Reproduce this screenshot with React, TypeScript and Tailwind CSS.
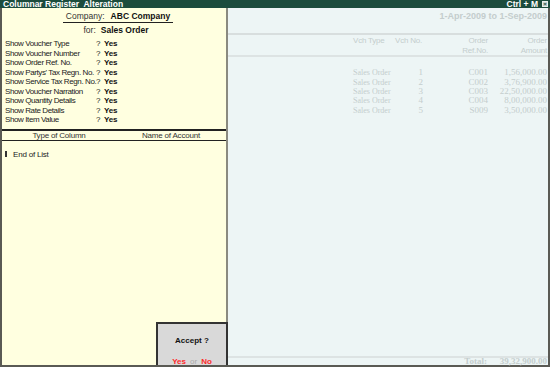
import React from 'react'

const options = [
  'Show Voucher Type',
  'Show Voucher Number',
  'Show Order Ref. No.',
  "Show Partys' Tax Regn. No.",
  'Show Service Tax Regn. No.',
  'Show Voucher Narration',
  'Show Quantity Details',
  'Show Rate Details',
  'Show Item Value',
]

const rows = [
  { no: '1', ref: 'C001', amt: '1,56,000.00' },
  { no: '2', ref: 'C002', amt: '3,76,900.00' },
  { no: '3', ref: 'C003', amt: '22,50,000.00' },
  { no: '4', ref: 'C004', amt: '8,00,000.00' },
  { no: '5', ref: 'S009', amt: '3,50,000.00' },
]

const serif = { fontFamily: '"Liberation Serif", "Times New Roman", serif' }

export default function App() {
  return (
    <div className="w-[550px] h-[367px] flex flex-col bg-white text-[8px] leading-[9px] tracking-[-0.2px]" style={{ fontFamily: '"Liberation Sans", Arial, sans-serif' }}>
      {/* Title bar */}
      <div className="h-[8px] bg-[#1c4c3d] flex items-center justify-between text-white font-bold text-[8.5px] tracking-normal pl-[3px] pr-[2px] overflow-hidden">
        <span>Columnar Register&nbsp; Alteration</span>
        <div className="flex items-center gap-[4px]">
          <span>Ctrl + M</span>
          <span className="w-[6px] h-[6px] bg-[#c8d4d0] border border-[#e8eeec] flex items-center justify-center text-[#1c4c3d] text-[6px]">×</span>
        </div>
      </div>

      <div className="flex-1 flex border-l-2 border-r-2 border-b-2 border-[#5a5a54] min-h-0">
        {/* Left panel */}
        <div className="relative w-[226px] bg-[#ffffe0] border-r-2 border-[#8a8a80] flex flex-col text-[#111]">
          <div className="flex flex-col items-center pt-[4px] pl-[4px] text-[8.5px] tracking-normal">
            <div className="flex items-baseline gap-[6px] border-b border-[#222] px-[3px] pb-[1px] ml-[4px]">
              <span className="text-[#333]">Company:</span>
              <span className="font-bold">ABC Company</span>
            </div>
            <div className="flex items-baseline gap-[5px] mt-[3px]">
              <span className="text-[#333]">for:</span>
              <span className="font-bold">Sales Order</span>
            </div>
          </div>

          <div className="flex flex-col pl-[3px] mt-[4px]">
            {options.map((o) => (
              <div key={o} className="flex items-center h-[9.5px]">
                <span className="w-[91px] whitespace-nowrap text-[#222] tracking-[-0.4px]">{o}</span>
                <span className="w-[8px] text-[#222]">?</span>
                <span className="font-bold">Yes</span>
              </div>
            ))}
          </div>

          <div className="mt-[4px] border-t-2 border-b border-[#222] h-[12px] flex items-center text-[#333]">
            <span className="w-[114px] text-center">Type of Column</span>
            <span className="flex-1 text-center">Name of Account</span>
          </div>

          <div className="flex items-center gap-[6px] pl-[3px] mt-[9px] text-[#222]">
            <span className="w-[2px] h-[6px] bg-[#333]"></span>
            <span>End of List</span>
          </div>

          {/* Accept box */}
          <div className="absolute right-[-2px] bottom-0 w-[72px] h-[43px] bg-[#d9d9d9] border-2 border-b-0 border-[#333] flex flex-col items-center tracking-normal">
            <span className="font-bold text-[#111] mt-[12px]">Accept ?</span>
            <div className="mt-[12px] flex items-baseline gap-[4px] font-bold">
              <span className="text-[#ff2a2a]">Yes</span>
              <span className="text-[#aaa] font-normal">or</span>
              <span className="text-[#ff2a2a]">No</span>
            </div>
          </div>
        </div>

        {/* Right panel */}
        <div className="flex-1 bg-[#edf5f5] flex flex-col text-[#c4cdcd]">
          <div className="mt-[4px] h-[9px] flex items-center justify-end pr-[1px] font-bold text-[9px] tracking-normal">
            1-Apr-2009 to 1-Sep-2009
          </div>
          <div className="border-t-2 border-[#d8dede] mt-[12px]"></div>
          <div className="flex h-[20px] pt-[1px]">
            <span className="w-[125px]"></span>
            <span className="w-[42px]">Vch Type</span>
            <span className="w-[40px]">Vch No.</span>
            <div className="w-[53px] flex flex-col items-end gap-[1px]">
              <span>Order</span>
              <span>Ref.No.</span>
            </div>
            <div className="flex-1 flex flex-col items-end gap-[1px] pr-[1px]">
              <span>Order</span>
              <span>Amount</span>
            </div>
          </div>
          <div className="border-t-2 border-[#dde3e3]"></div>
          <div className="flex flex-col mt-[11px] tracking-normal" style={serif}>
            {rows.map((r) => (
              <div key={r.no} className="flex items-center h-[9.4px] text-[9px]">
                <span className="w-[125px]"></span>
                <span className="w-[46px] text-[8px]">Sales Order</span>
                <span className="w-[24px] text-right">{r.no}</span>
                <span className="w-[65px] text-right">{r.ref}</span>
                <span className="flex-1 text-right pr-[1px]">{r.amt}</span>
              </div>
            ))}
          </div>
          <div className="flex-1"></div>
          <div className="border-t-2 border-[#dde3e3] h-[9px] flex items-center justify-end font-bold tracking-normal text-[9px]" style={serif}>
            <span className="w-[60px] text-right">Total:</span>
            <span className="w-[61px] text-right pr-[1px]">39,32,900.00</span>
          </div>
        </div>
      </div>
    </div>
  )
}
